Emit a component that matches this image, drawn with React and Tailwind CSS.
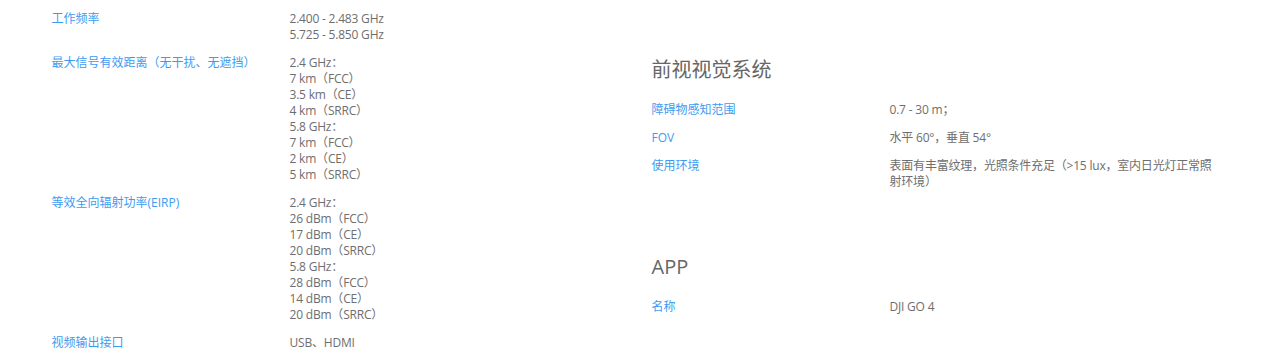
import React from 'react';

const font = { fontFamily: '"Open Sans", "Noto Sans CJK SC", sans-serif' };

const leftSpecs = [
    { label: '工作频率', values: ['2.400 - 2.483 GHz', '5.725 - 5.850 GHz'] },
    {
        label: '最大信号有效距离（无干扰、无遮挡）',
        values: ['2.4 GHz：', '7 km（FCC）', '3.5 km（CE）', '4 km（SRRC）', '5.8 GHz：', '7 km（FCC）', '2 km（CE）', '5 km（SRRC）'],
    },
    {
        label: '等效全向辐射功率(EIRP)',
        values: ['2.4 GHz：', '26 dBm（FCC）', '17 dBm（CE）', '20 dBm（SRRC）', '5.8 GHz：', '28 dBm（FCC）', '14 dBm（CE）', '20 dBm（SRRC）'],
    },
    { label: '视频输出接口', values: ['USB、HDMI'] },
];

const sections = [
    {
        title: '前视视觉系统',
        specs: [
            { label: '障碍物感知范围', values: ['0.7 - 30 m；'] },
            { label: 'FOV', values: ['水平 60°，垂直 54°'] },
            { label: '使用环境', values: ['表面有丰富纹理，光照条件充足（>15 lux，室内日光灯正常照射环境）'] },
        ],
    },
    {
        title: 'APP',
        specs: [{ label: '名称', values: ['DJI GO 4'] }],
    },
];

function SpecRow({ label, values }) {
    return (
        <div className="flex text-[12px] leading-4">
            <div className="w-[238px] shrink-0 pr-4 text-[#3d9bf2]">{label}</div>
            <div className="w-[328px] shrink-0 text-[#6e6e6e] tracking-[-0.2px]">
                {values.map((v, i) => (
                    <div key={i}>{v}</div>
                ))}
            </div>
        </div>
    );
}

export default function App() {
    return (
        <div className="min-h-screen bg-white" style={font}>
            <div className="mx-auto grid w-[1200px] grid-cols-2">
                <div className="flex flex-col gap-3 px-5 pt-[11px]">
                    {leftSpecs.map((s, i) => (
                        <SpecRow key={i} {...s} />
                    ))}
                </div>
                <div className="flex flex-col gap-[63px] px-5 pt-[56px]">
                    {sections.map((sec, i) => (
                        <div key={i}>
                            <h2 className="mb-[18px] text-[20px] leading-7 text-[#666]">{sec.title}</h2>
                            <div className="flex flex-col gap-3">
                                {sec.specs.map((s, j) => (
                                    <SpecRow key={j} {...s} />
                                ))}
                            </div>
                        </div>
                    ))}
                </div>
            </div>
        </div>
    );
}
